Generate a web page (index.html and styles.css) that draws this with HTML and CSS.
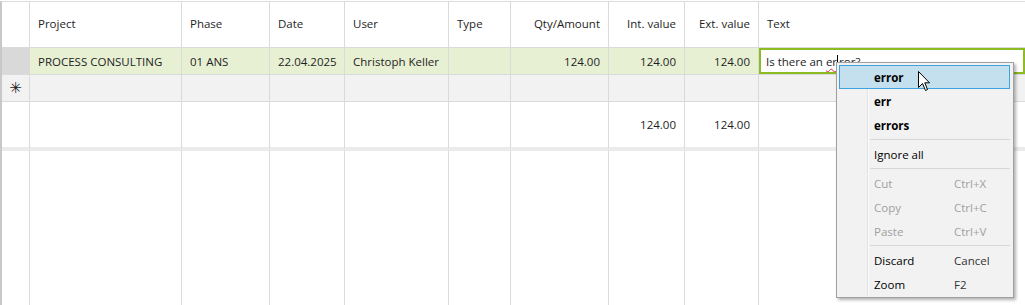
FILE: index.html
```html
<!DOCTYPE html>
<html lang="en">
<head>
  <meta charset="UTF-8">
  <title>Time entries</title>
  <link rel="stylesheet" href="styles.css">
</head>
<body>
  <div class="wrap">
    <div class="grid">
      <!-- header -->
      <div class="cell hdr rowhdr"></div>
      <div class="cell hdr">Project</div>
      <div class="cell hdr">Phase</div>
      <div class="cell hdr">Date</div>
      <div class="cell hdr">User</div>
      <div class="cell hdr">Type</div>
      <div class="cell hdr num">Qty/Amount</div>
      <div class="cell hdr num">Int. value</div>
      <div class="cell hdr num">Ext. value</div>
      <div class="cell hdr last">Text</div>

      <!-- data row -->
      <div class="cell rowhdr sel"></div>
      <div class="cell data">PROCESS CONSULTING</div>
      <div class="cell data">01 ANS</div>
      <div class="cell data">22.04.2025</div>
      <div class="cell data">Christoph Keller</div>
      <div class="cell data"></div>
      <div class="cell data num">124.00</div>
      <div class="cell data num">124.00</div>
      <div class="cell data num">124.00</div>
      <div class="cell editing last"><span>Is there an <span class="typo">er<span class="caret"></span>ror</span>?</span></div>

      <!-- new row -->
      <div class="cell rowhdr newrow"><span class="star">&#x2733;</span></div>
      <div class="cell newrow"></div>
      <div class="cell newrow"></div>
      <div class="cell newrow"></div>
      <div class="cell newrow"></div>
      <div class="cell newrow"></div>
      <div class="cell newrow"></div>
      <div class="cell newrow"></div>
      <div class="cell newrow"></div>
      <div class="cell newrow last"></div>

      <!-- totals -->
      <div class="cell rowhdr total"></div>
      <div class="cell total"></div>
      <div class="cell total"></div>
      <div class="cell total"></div>
      <div class="cell total"></div>
      <div class="cell total"></div>
      <div class="cell total"></div>
      <div class="cell total num">124.00</div>
      <div class="cell total num">124.00</div>
      <div class="cell total last"></div>

      <!-- empty space -->
      <div class="cell fill rowhdr"></div>
      <div class="cell fill"></div>
      <div class="cell fill"></div>
      <div class="cell fill"></div>
      <div class="cell fill"></div>
      <div class="cell fill"></div>
      <div class="cell fill"></div>
      <div class="cell fill"></div>
      <div class="cell fill"></div>
      <div class="cell fill last"></div>
    </div>

    <div class="menu">
      <div class="item hot bold">error</div>
      <div class="item bold">err</div>
      <div class="item bold">errors</div>
      <div class="sep"></div>
      <div class="item">Ignore all</div>
      <div class="sep"></div>
      <div class="item off">Cut<span class="key">Ctrl+X</span></div>
      <div class="item off">Copy<span class="key">Ctrl+C</span></div>
      <div class="item off">Paste<span class="key">Ctrl+V</span></div>
      <div class="sep"></div>
      <div class="item">Discard<span class="key">Cancel</span></div>
      <div class="item">Zoom<span class="key">F2</span></div>
    </div>

    <svg class="pointer" width="14" height="22" viewBox="0 0 14 22">
      <path d="M0.5 0.5 L0.5 16.5 L4.5 12.5 L7.5 19.5 L9.5 18.5 L6.8 11.8 L11.5 11.8 Z" fill="#fff" stroke="#000" stroke-width="1"/>
    </svg>
  </div>
</body>
</html>
```

FILE: styles.css
```css
* { box-sizing: border-box; }
html, body { margin: 0; padding: 0; }
body {
  width: 1025px; height: 305px; overflow: hidden;
  background: #fff;
  font-family: "Open Sans", "Noto Sans", Arial, sans-serif;
  font-size: 11.5px;
  color: #1e1e1e;
}
.wrap {
  position: relative;
  height: 305px;
  padding-top: 1px;
}
.grid {
  display: grid;
  grid-template-columns: 28px 152px 88px 75px 104px 62px 98px 76px 74px 1fr;
  grid-template-rows: 46px 27px 27px 49px 1fr;
  height: 304px;
  border-top: 1px solid #dcdcdc;
  border-left: 2px solid #c8c8c8;
}
.cell {
  border-right: 1px solid #dadada;
  border-bottom: 1px solid #dadada;
  padding: 0 8px;
  display: flex; align-items: center;
  white-space: pre;
}
.cell.last { border-right: none; }
.num { justify-content: flex-end; }
.hdr { padding-bottom: 2px; }
.rowhdr { padding: 0; justify-content: center; }
.data { background: #e8f0d4; }
.rowhdr.sel { background: #d9d9d9; }
.newrow { background: #f2f2f2; }
.total { border-bottom: 4px solid #ebebeb; }
.fill { border-bottom: none; }
.star { font-size: 15px; color: #222; line-height: 1; font-family: "DejaVu Sans", sans-serif; }

.editing {
  background: #fff;
  box-shadow: inset 0 0 0 2px #8cbb22;
  padding-left: 7px;
}
.typo {
  position: relative;
  text-decoration: underline wavy #e03030;
  text-decoration-thickness: 1px;
  text-underline-offset: 2px;
}
.caret {
  display: inline-block;
  width: 1px; height: 13px;
  background: #000;
  vertical-align: -2px;
  margin: 0 1px 0 0;
}

.menu {
  position: absolute;
  left: 836px; top: 62px;
  width: 178px;
  padding: 2px 3px 1px 2px;
  background: #f2f2f2;
  border: 1px solid #a0a0a0;
  box-shadow: 2px 2px 3px rgba(0,0,0,0.3);
}
.menu::before {
  content: "";
  position: absolute;
  left: 30px; top: 2px; bottom: 1px;
  border-left: 1px solid #e2e2e2;
  border-right: 1px solid #fcfcfc;
}
.item {
  position: relative;
  height: 24px;
  padding-left: 34px;
  display: flex; align-items: center;
  border: 1px solid transparent;
  color: #000;
}
.item.bold { font-weight: bold; }
.item.hot {
  background: #c4dfed;
  border-color: #3ea2de;
}
.item.off { color: #a0a0a0; }
.key {
  position: absolute;
  left: 114px;
  color: #333;
}
.item.off .key { color: #a0a0a0; }
.sep {
  height: 1px;
  margin: 2px 0 2px 31px;
  background: #d7d7d7;
}
.pointer {
  position: absolute;
  left: 918px; top: 71px;
}
```
